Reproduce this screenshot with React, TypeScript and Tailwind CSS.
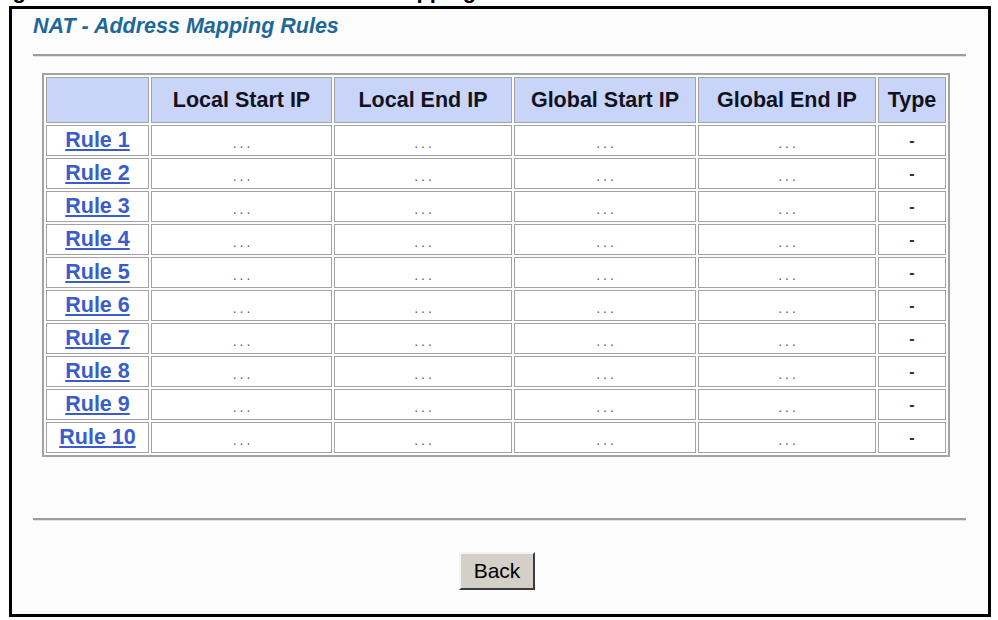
import React from "react";

const cols = [103, 181, 178, 182, 178, 68];
const headers = ["", "Local Start IP", "Local End IP", "Global Start IP", "Global End IP", "Type"];
const rules = Array.from({ length: 10 }, (_, i) => `Rule ${i + 1}`);

function Dots() {
  return (
    <span className="inline-block pt-[6px] pl-[3px] text-[14px] leading-[14px] tracking-[3px] text-[#5e5e5e]">...</span>
  );
}

export default function App() {
  return (
    <div className="w-[998px] h-[620px] bg-white font-['Liberation_Sans',Arial,sans-serif] overflow-hidden">
      {/* clipped figure caption */}
      <div className="h-[6px] overflow-hidden">
        <div className="-mt-[21px] -ml-[7px] flex whitespace-nowrap text-[22px] leading-[24px] font-bold text-black">
          <span>Figure 70</span>
          <span className="ml-[152px]">NAT Address Mapping Rules</span>
        </div>
      </div>

      {/* frame */}
      <div className="ml-[9px] w-[982px] border-[3px] border-black bg-[#fcfcfc] pt-[5px] pb-[24px]">
        <div className="pl-[21px] text-[21.5px] leading-[24px] font-bold italic text-[#1d6899]">
          NAT - Address Mapping Rules
        </div>

        <div className="ml-[21px] mr-[22px] mt-[16px] h-[3px] border-t-2 border-[#9c9c9c] border-b border-b-[#e2e2e2]" />

        <div className="ml-[30px] mt-[16px]">
          <table className="table-fixed w-[908px] border-separate border-spacing-[2px] border-2 border-[#a3a3a3] bg-[#fcfcfc]">
            <colgroup>
              {cols.map((w, i) => (
                <col key={i} style={{ width: w }} />
              ))}
            </colgroup>
            <thead>
              <tr className="h-[46px]">
                {headers.map((h, i) => (
                  <th
                    key={i}
                    className="border border-[#a3a3a3] bg-[#c8d5f9] p-0 text-center align-middle text-[21.5px] leading-[24px] font-bold text-[#11121e] whitespace-nowrap"
                  >
                    {h}
                  </th>
                ))}
              </tr>
            </thead>
            <tbody>
              {rules.map((r) => (
                <tr key={r} className="h-[31px]">
                  <td className="border border-[#a3a3a3] bg-white p-0 text-center align-middle">
                    <a
                      href="#"
                      className="text-[21.5px] leading-[24px] font-bold text-[#3a5ccc] underline decoration-[2px] underline-offset-[2px] whitespace-nowrap"
                    >
                      {r}
                    </a>
                  </td>
                  {[0, 1, 2, 3].map((c) => (
                    <td key={c} className="border border-[#a3a3a3] bg-white p-0 text-center align-middle leading-none">
                      <Dots />
                    </td>
                  ))}
                  <td className="border border-[#a3a3a3] bg-white p-0 text-center align-middle text-[16px] leading-[20px] font-bold text-[#333]">
                    -
                  </td>
                </tr>
              ))}
            </tbody>
          </table>
        </div>

        <div className="ml-[21px] mr-[22px] mt-[61px] h-[3px] border-t-2 border-[#9c9c9c] border-b border-b-[#e2e2e2]" />

        <div className="mt-[31px] flex justify-center pr-[6px]">
          <button className="w-[76px] h-[38px] bg-[#d4d0c8] border-2 border-t-[#f4f4f4] border-l-[#f4f4f4] border-r-[#3c3c3c] border-b-[#3c3c3c] text-[21px] leading-[24px] text-black">
            Back
          </button>
        </div>
      </div>
    </div>
  );
}
